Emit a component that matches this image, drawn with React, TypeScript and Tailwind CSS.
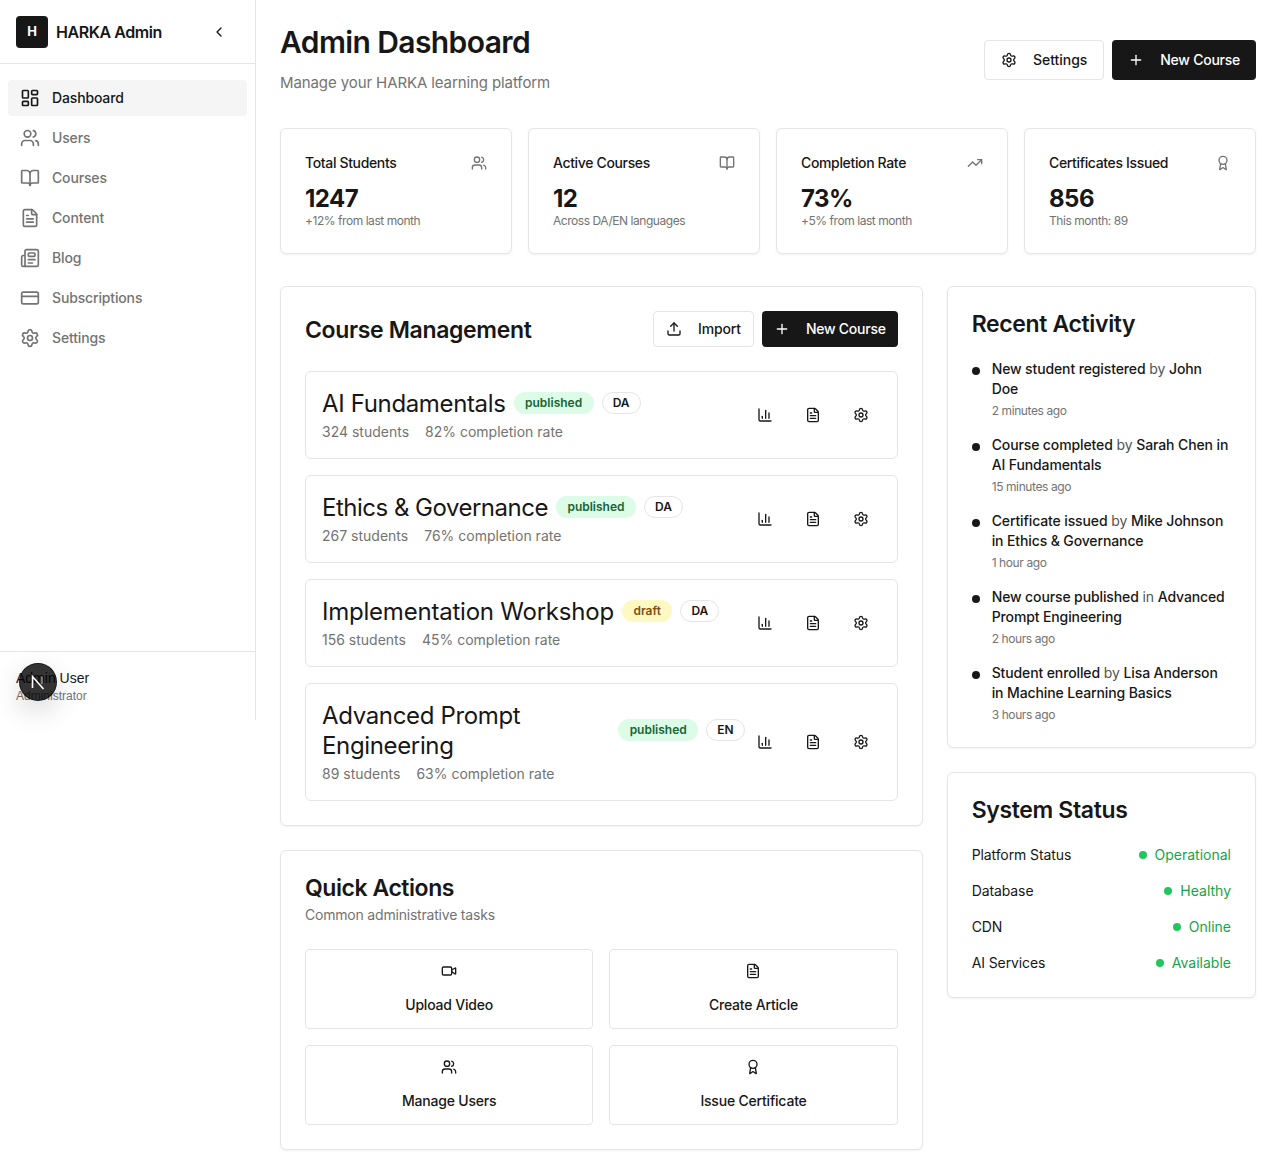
import {
  Award,
  BookOpen,
  ChartColumn,
  ChevronLeft,
  CreditCard,
  FileText,
  LayoutDashboard,
  Newspaper,
  Plus,
  Settings,
  TrendingUp,
  Upload,
  Users,
  Video,
} from 'lucide-react';

const navItems = [
  { name: 'Dashboard', icon: LayoutDashboard, active: true },
  { name: 'Users', icon: Users },
  { name: 'Courses', icon: BookOpen },
  { name: 'Content', icon: FileText },
  { name: 'Blog', icon: Newspaper },
  { name: 'Subscriptions', icon: CreditCard },
  { name: 'Settings', icon: Settings },
];

const stats = [
  { title: 'Total Students', value: '1247', note: '+12% from last month', icon: Users },
  { title: 'Active Courses', value: '12', note: 'Across DA/EN languages', icon: BookOpen },
  { title: 'Completion Rate', value: '73%', note: '+5% from last month', icon: TrendingUp },
  { title: 'Certificates Issued', value: '856', note: 'This month: 89', icon: Award },
];

const courses = [
  { title: 'AI Fundamentals', status: 'published', lang: 'DA', students: 324, rate: 82, tracking: 'tracking-[-0.35px]' },
  { title: 'Ethics & Governance', status: 'published', lang: 'DA', students: 267, rate: 76, tracking: 'tracking-[-0.5px]' },
  { title: 'Implementation Workshop', status: 'draft', lang: 'DA', students: 156, rate: 45, tracking: 'tracking-[-0.22px]' },
  { title: 'Advanced Prompt Engineering', status: 'published', lang: 'EN', students: 89, rate: 63, tracking: 'tracking-[-0.35px]' },
];

const quickActions = [
  { name: 'Upload Video', icon: Video },
  { name: 'Create Article', icon: FileText },
  { name: 'Manage Users', icon: Users },
  { name: 'Issue Certificate', icon: Award },
];

const activity = [
  { text: 'New student registered', by: 'by', who: 'John Doe', time: '2 minutes ago' },
  { text: 'Course completed', by: 'by', who: 'Sarah Chen in AI Fundamentals', time: '15 minutes ago' },
  { text: 'Certificate issued', by: 'by', who: 'Mike Johnson in Ethics & Governance', time: '1 hour ago' },
  { text: 'New course published', by: 'in', who: 'Advanced Prompt Engineering', time: '2 hours ago' },
  { text: 'Student enrolled', by: 'by', who: 'Lisa Anderson in Machine Learning Basics', time: '3 hours ago' },
];

const systemStatus = [
  { name: 'Platform Status', value: 'Operational' },
  { name: 'Database', value: 'Healthy' },
  { name: 'CDN', value: 'Online' },
  { name: 'AI Services', value: 'Available' },
];

const App = () => {
  return (
    <div className="flex bg-white text-[#171717] font-['Inter',sans-serif]">
      {/* Sidebar */}
      <aside className="flex h-[720px] w-64 shrink-0 flex-col border-r border-[#e5e5e5]">
        <div className="flex h-16 items-center justify-between border-b border-[#e5e5e5] pl-4 pr-7">
          <div className="flex items-center gap-2">
            <div className="flex h-8 w-8 items-center justify-center rounded-[4px] bg-[#171717] text-[13px] font-bold text-white">
              H
            </div>
            <span className="text-base font-semibold tracking-[-0.45px]">HARKA Admin</span>
          </div>
          <ChevronLeft className="h-4 w-4" />
        </div>

        <nav className="flex flex-col gap-1 py-4 pl-2 pr-2">
          {navItems.map((item) => (
            <div
              key={item.name}
              className={`flex h-9 items-center gap-3 rounded-[4px] px-3 text-sm font-[450] tracking-[-0.15px] ${
                item.active ? 'bg-[#f5f5f5] text-[#171717]' : 'text-[#737373]'
              }`}
            >
              <item.icon className="h-5 w-5" />
              {item.name}
            </div>
          ))}
        </nav>

        <div className="mt-auto border-t border-[#e5e5e5] p-4 font-['Liberation_Sans',sans-serif]">
          <p className="text-sm font-medium leading-5">Admin User</p>
          <p className="text-xs leading-4 text-[#737373]">Administrator</p>
        </div>
      </aside>

      {/* Main */}
      <main className="min-w-0 flex-1 p-6">
        <div className="mb-8 flex items-center justify-between">
          <div>
            <h1 className="text-3xl font-semibold tracking-[-0.6px]">Admin Dashboard</h1>
            <p className="mt-[11px] pb-px text-[15px] leading-6 tracking-[-0.1px] text-[#737373]">Manage your HARKA learning platform</p>
          </div>
          <div className="flex gap-2">
            <button className="flex h-10 items-center gap-4 rounded-[4px] border border-[#e5e5e5] px-4 text-sm font-[450] tracking-[-0.05px]">
              <Settings className="h-4 w-4" />
              Settings
            </button>
            <button className="flex h-10 items-center gap-4 rounded-[4px] bg-[#171717] px-4 text-sm font-[450] tracking-[-0.25px] text-white">
              <Plus className="h-4 w-4" />
              New Course
            </button>
          </div>
        </div>

        {/* Stats */}
        <div className="mb-8 grid grid-cols-4 gap-4">
          {stats.map((stat) => (
            <div key={stat.title} className="rounded-md border border-[#e5e5e5] bg-white p-6 shadow-xs">
              <div className="flex items-center justify-between pb-2">
                <h3 className="text-sm font-[450] leading-5 tracking-[-0.35px]">{stat.title}</h3>
                <stat.icon className="h-4 w-4 text-[#737373]" />
              </div>
              <div className="translate-y-0.5 text-2xl font-bold leading-8 tracking-[-0.5px]">{stat.value}</div>
              <p className="text-xs leading-4 tracking-[-0.45px] text-[#737373]">{stat.note}</p>
            </div>
          ))}
        </div>

        <div className="grid grid-cols-3 gap-6">
          <div className="col-span-2 flex flex-col gap-6">
            {/* Course Management */}
            <section className="rounded-md border border-[#e5e5e5] bg-white p-6 shadow-xs">
              <div className="mb-6 flex items-center justify-between">
                <h2 className="translate-y-px text-[23px] font-semibold tracking-[-0.35px]">Course Management</h2>
                <div className="flex gap-2">
                  <button className="flex h-9 items-center gap-4 rounded-[4px] border border-[#e5e5e5] px-3 text-sm font-[450] tracking-[-0.15px]">
                    <Upload className="h-4 w-4" />
                    Import
                  </button>
                  <button className="flex h-9 items-center gap-4 rounded-[4px] bg-[#171717] px-3 text-sm font-[450] tracking-[-0.25px] text-white">
                    <Plus className="h-4 w-4" />
                    New Course
                  </button>
                </div>
              </div>

              <div className="flex flex-col gap-4">
                {courses.map((course) => (
                  <div key={course.title} className="flex items-center justify-between rounded-md border border-[#e5e5e5] p-4">
                    <div className="min-w-0 flex-1">
                      <div className="flex items-center gap-2">
                        <h3 className={`translate-y-px text-2xl font-normal leading-[30px] ${course.tracking}`}>{course.title}</h3>
                        <span
                          className={`shrink-0 rounded-full px-[11.5px] py-0.5 text-xs font-semibold leading-[18px] ${
                            course.status === 'draft' ? 'bg-[#fef9c3] text-[#854d0e]' : 'bg-[#dcfce7] text-[#166534]'
                          }`}
                        >
                          {course.status}
                        </span>
                        <span className="shrink-0 rounded-full border border-[#e5e5e5] px-2.5 py-px text-xs font-semibold leading-[18px]">
                          {course.lang}
                        </span>
                      </div>
                      <div className="mt-1 flex gap-4 text-sm text-[#737373]">
                        <span>{course.students} students</span>
                        <span>{course.rate}% completion rate</span>
                      </div>
                    </div>
                    <div className="flex shrink-0 gap-2">
                      {[ChartColumn, FileText, Settings].map((Icon, i) => (
                        <button key={i} className="flex h-9 w-10 items-center justify-center rounded-md">
                          <Icon className="h-4 w-4" />
                        </button>
                      ))}
                    </div>
                  </div>
                ))}
              </div>
            </section>

            {/* Quick Actions */}
            <section className="rounded-md border border-[#e5e5e5] bg-white p-6 shadow-xs">
              <h2 className="translate-y-px text-[23px] font-semibold leading-6 tracking-[-0.45px]">Quick Actions</h2>
              <p className="mt-1.5 text-sm tracking-[-0.2px] text-[#737373]">Common administrative tasks</p>
              <div className="mt-6 grid grid-cols-2 gap-4">
                {quickActions.map((action) => (
                  <button
                    key={action.name}
                    className="flex h-20 flex-col items-center justify-center gap-4 rounded-[4px] border border-[#e5e5e5] text-sm font-[450] tracking-[-0.2px]"
                  >
                    <action.icon className="h-4 w-4" />
                    {action.name}
                  </button>
                ))}
              </div>
            </section>
          </div>

          <div className="flex flex-col gap-6 self-start">
            {/* Recent Activity */}
            <section className="rounded-md border border-[#e5e5e5] bg-white p-6 shadow-xs">
              <h2 className="translate-y-px text-[23px] font-semibold leading-6 tracking-[-0.35px]">Recent Activity</h2>
              <div className="mt-6 flex flex-col gap-4">
                {activity.map((item) => (
                  <div key={item.time} className="flex gap-3">
                    <div className="mt-2 h-2 w-2 shrink-0 rounded-full bg-[#171717]" />
                    <div>
                      <p className="text-sm tracking-[-0.12px]">
                        <span className="font-[450]">{item.text}</span>{' '}
                        <span className="text-[#525252]">{item.by}</span>{' '}
                        <span className="font-[450]">{item.who}</span>
                      </p>
                      <p className="mt-1 text-xs leading-4 tracking-[-0.4px] text-[#737373]">{item.time}</p>
                    </div>
                  </div>
                ))}
              </div>
            </section>

            {/* System Status */}
            <section className="rounded-md border border-[#e5e5e5] bg-white p-6 shadow-xs">
              <h2 className="translate-y-px text-[23px] font-semibold leading-6 tracking-[-0.35px]">System Status</h2>
              <div className="mt-6 flex flex-col gap-4">
                {systemStatus.map((row) => (
                  <div key={row.name} className="flex items-center justify-between text-sm">
                    <span className="tracking-[-0.1px]">{row.name}</span>
                    <span className="flex items-center gap-2 text-[#16a34a]">
                      <span className="h-2 w-2 rounded-full bg-[#22c55e]" />
                      {row.value}
                    </span>
                  </div>
                ))}
              </div>
            </section>
          </div>
        </div>
      </main>

      {/* Next dev indicator */}
      <div className="absolute left-[19px] top-[663px] flex h-[38px] w-[38px] items-center justify-center rounded-full border border-black/60 bg-black/80 shadow-[0_10px_28px_rgba(0,0,0,0.16)]">
        <svg width="18" height="18" viewBox="0 0 18 18" fill="none">
          <path d="M3.5 15V3.5L14.5 16" stroke="white" strokeWidth="1.6" />
          <path d="M13 3.5V11" stroke="#999" strokeWidth="1.4" />
        </svg>
      </div>
    </div>
  );
};

export default App;
